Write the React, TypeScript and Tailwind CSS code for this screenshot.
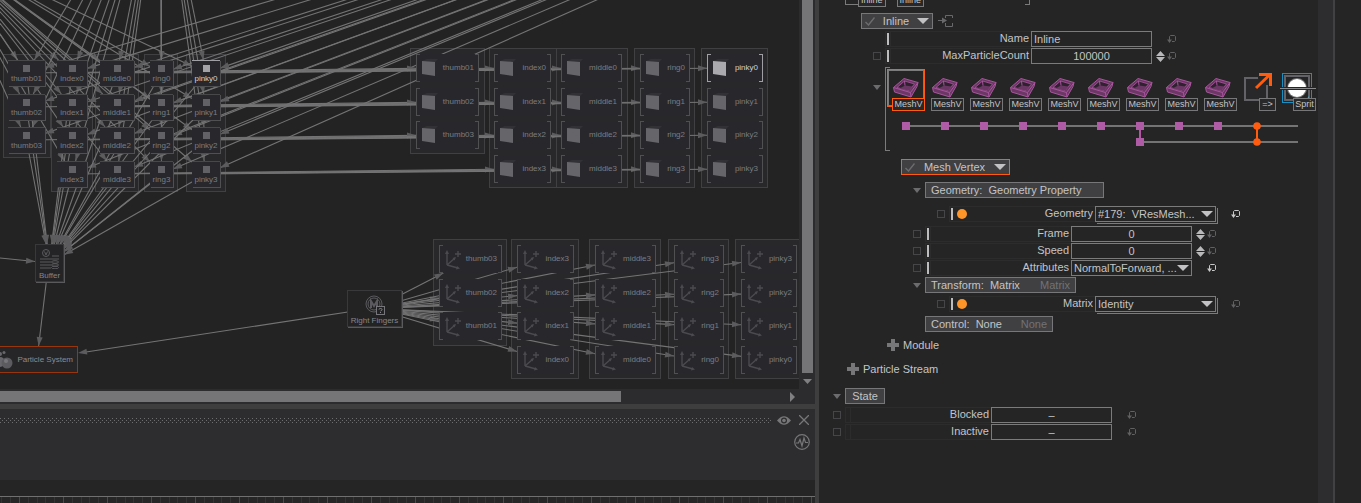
import { useState } from "react";
import type { ReactNode } from "react";

type Box = { id: string; x: number; y: number; w: number; h: number };
type Point = { x: number; y: number };

const ROWS = [0, 34, 67, 101];

const FINGERS = [
  { name: "thumb", count: 3 },
  { name: "index", count: 4 },
  { name: "middle", count: 4 },
  { name: "ring", count: 4 },
  { name: "pinky", count: 4 },
];

function label(finger: number, row: number) {
  return finger === 0 ? `thumb0${row + 1}` : `${FINGERS[finger].name}${row}`;
}

function column(finger: number, x: number, w: number, top: number, h: number, reversed = false): Box[] {
  const { count } = FINGERS[finger];
  return Array.from({ length: count }, (_, i) => ({
    id: label(finger, reversed ? count - 1 - i : i),
    x,
    y: top + ROWS[i],
    w,
    h,
  }));
}

const small = [[8, 37], [57, 30], [100, 34], [150, 23], [192, 28]].flatMap(([x, w], i) => column(i, x, w, 60, 26));
const meshes = [[416, 63], [494, 57], [561, 61], [640, 50], [707, 56]].flatMap(([x, w], i) => column(i, x, w, 54, 28));
const axes = [[439, 63], [517, 57], [595, 61], [674, 50], [741, 56]].flatMap(([x, w], i) =>
  column(i, x, w, 245, 28, true)
);

const groups: Box[] = [
  ...[[3, 48, 104], [51, 42, 138], [95, 44, 138], [144, 34, 138], [186, 40, 138]].map(([x, w, h], i) => ({
    id: `small-${i}`, x, y: 54, w, h,
  })),
  ...[[410, 75, 106], [489, 68, 140], [556, 72, 140], [634, 61, 140], [701, 67, 140]].map(([x, w, h], i) => ({
    id: `mesh-${i}`, x, y: 48, w, h,
  })),
  ...[[433, 74, 107], [511, 68, 140], [589, 72, 140], [668, 61, 140], [735, 72, 140]].map(([x, w, h], i) => ({
    id: `axis-${i}`, x, y: 239, w, h,
  })),
];

const buffer: Box = { id: "Buffer", x: 35, y: 244, w: 29, h: 38 };
const rightFingers: Box = { id: "Right Fingers", x: 347, y: 290, w: 55, h: 37 };
const particles: Box = { id: "Particle System", x: -8, y: 346, w: 86, h: 27 };

const center = (b: Box): Point => ({ x: b.x + b.w / 2, y: b.y + b.h / 2 });

// Parents that sit outside of the scrolled area
const offscreen: Point[] = [
  { x: -60, y: -54 },
  { x: 161, y: -150 },
  { x: 1236, y: -285 },
];

const edges: { from: Point; to: Box }[] = [
  ...offscreen.flatMap((from) => small.map((to) => ({ from, to }))),
  ...small.map((b) => ({ from: center(b), to: buffer })),
  ...small.map((b, i) => ({ from: center(b), to: meshes[i] })),
  ...axes.map((to) => ({ from: center(rightFingers), to })),
  { from: { x: 47, y: 276 }, to: { ...particles, x: 0, w: 74 } },
  { from: { x: -60, y: 252 }, to: buffer },
];

function Edge({ from, to }: { from: Point; to: Box }) {
  const c = center(to);
  const dx = c.x - from.x;
  const dy = c.y - from.y;
  const k = Math.min(to.w / 2 / Math.abs(dx || 1), to.h / 2 / Math.abs(dy || 1));
  const tip = { x: c.x - dx * k, y: c.y - dy * k };
  const angle = (Math.atan2(dy, dx) * 180) / Math.PI;
  return (
    <g>
      <line x1={from.x} y1={from.y} x2={tip.x} y2={tip.y} stroke="#747475" strokeWidth="1.1" />
      <path d="M0 0L-9 -3V3Z" fill="#5c5c5e" transform={`translate(${tip.x} ${tip.y}) rotate(${angle})`} />
    </g>
  );
}

function place(b: Box) {
  return { left: b.x, top: b.y, width: b.w, height: b.h };
}

function SmallNode({ box }: { box: Box }) {
  const on = box.id === "pinky0";
  return (
    <div
      className={`absolute flex flex-col items-center justify-between whitespace-nowrap border-t bg-[#28282c] pb-0.5 pt-1 text-[8px] leading-[10px] shadow-[1px_1px_0_#505053] ${
        on ? "border-[#a0a0a4] text-[#d2d2d4]" : "border-[#48484b] text-[#7c7c80]"
      }`}
      style={place(box)}
    >
      <span className={`size-[7px] ${on ? "bg-[#a3a3a7]" : "bg-[#626266]"}`} />
      <span>{box.id}</span>
    </div>
  );
}

function Brackets({ on }: { on: boolean }) {
  const tone = on ? "border-[#a0a0a4]" : "border-[#505053]";
  return (
    <>
      <span className={`w-1 self-stretch border-y border-l ${tone}`} />
      <span className={`order-last w-1 self-stretch border-y border-r ${tone}`} />
    </>
  );
}

function MeshNode({ box }: { box: Box }) {
  const on = box.id === "pinky0";
  return (
    <div
      className={`absolute flex items-center bg-[#28282c] text-[8px] leading-[10px] ${
        on ? "text-[#d2d2d4]" : "text-[#7c7c80]"
      }`}
      style={place(box)}
    >
      <Brackets on={on} />
      <svg className="ml-0.5 shrink-0" width="17" height="18" viewBox="0 0 17 18">
        <path d="M0 2L5 0H16L13 3V15L13 17Z" fill="#323236" />
        <path d="M0 2L13 3V17L0 15Z" fill={on ? "#a9a9ae" : "#66666a"} />
      </svg>
      <span className="flex-1 pr-px text-right">{box.id}</span>
    </div>
  );
}

function AxisNode({ box }: { box: Box }) {
  return (
    <div
      className="absolute flex items-center bg-[#28282c] text-[8px] leading-[10px] text-[#7c7c80]"
      style={place(box)}
    >
      <Brackets on={false} />
      <svg className="ml-0.5 shrink-0" width="18" height="22" viewBox="0 0 18 22" fill="none" stroke="#4b4b4f">
        <path d="M2 17V4M2 17L10 10M2 17L13 20M10 6H16M13 3V9" strokeWidth="1.4" />
        <path d="M2 2L4 6H0ZM11 9L9.5 12.5L7.5 10ZM15 20.5L11 21.5L12 18Z" fill="#4b4b4f" stroke="none" />
      </svg>
      <span className="flex-1 pr-px text-right">{box.id}</span>
    </div>
  );
}

function NodeGraph() {
  return (
    <div className="relative min-w-0 flex-1 overflow-hidden bg-[#232323]">
      {groups.map((g) => (
        <div key={g.id} className="absolute border border-[#404043] bg-[#28282a]" style={place(g)} />
      ))}
      <svg className="absolute inset-0 size-full">
        <line x1="374" y1="308" x2="86" y2="352" stroke="#747475" strokeWidth="1.1" />
        <path d="M0 0L-9 -3V3Z" fill="#5c5c5e" transform="translate(78 353) rotate(171)" />
        {edges.map((e, i) => (
          <Edge key={i} {...e} />
        ))}
      </svg>
      {small.map((b) => <SmallNode key={b.id} box={b} />)}
      {meshes.map((b) => <MeshNode key={b.id} box={b} />)}
      {axes.map((b) => <AxisNode key={b.id} box={b} />)}

      <div
        className="absolute flex flex-col items-center justify-between border border-[#39393b] bg-[#242426] pt-1 text-[8px] leading-[10px] text-[#858589] shadow-[1px_1px_0_#5a5a5d]"
        style={place(buffer)}
      >
        <svg width="20" height="20" viewBox="0 0 20 20" fill="none" stroke="#5b5b5f">
          <circle cx="6" cy="4" r="3.5" />
          <path d="M4.5 2.5L6 6L7.5 2.5M12 7H19M0 10H19M0 13H11M0 16H11M0 19H11" />
          <ellipse cx="15" cy="13" rx="3.5" ry="1.3" />
          <ellipse cx="15" cy="16" rx="3.5" ry="1.3" />
          <ellipse cx="15" cy="18.5" rx="3.5" ry="1.3" />
        </svg>
        {buffer.id}
      </div>

      <div
        className="absolute flex flex-col items-center justify-between whitespace-nowrap border border-[#39393b] bg-[#232324] pt-1 text-[8px] leading-[10px] text-[#858589] shadow-[1px_1px_0_#5a5a5d]"
        style={place(rightFingers)}
      >
        <svg width="20" height="20" viewBox="0 0 20 20" fill="none" stroke="#5b5b5f">
          <circle cx="9" cy="9" r="8" />
          <circle cx="9" cy="9" r="6" />
          <path d="M6 13V6L9 11L12 6V13" strokeWidth="2" />
          <rect x="11.5" y="11.5" width="8" height="8" fill="#232324" stroke="#77777b" />
          <path d="M14 14.5Q14 13.5 15.5 13.5Q17 13.5 17 14.5Q17 15.5 15.5 16M15.5 17V18" stroke="#88888c" />
        </svg>
        {rightFingers.id}
      </div>

      <div
        className="absolute flex items-center justify-end gap-1 whitespace-nowrap border border-[#97350c] bg-[#262628] pr-1 text-[8px] text-[#8b8b90]"
        style={place(particles)}
      >
        <svg className="shrink-0" width="22" height="20" viewBox="0 0 22 20" fill="#68686c">
          <circle cx="9" cy="4" r="2" />
          <circle cx="13" cy="2.5" r="1.5" />
          <circle cx="9" cy="12" r="5" />
          <circle cx="16" cy="13" r="5.5" fill="#5c5c60" />
          <circle cx="15" cy="11" r="2" fill="#77777b" />
        </svg>
        {particles.id}
      </div>
    </div>
  );
}

function GraphPane() {
  return (
    <section className="flex min-h-0 flex-1 flex-col bg-[#2c2c2e]">
      <div className="flex min-h-0 flex-1">
        <NodeGraph />
        <div className="flex w-4 flex-col items-center">
          <div className="w-[11px] flex-1 bg-[#757577]" />
          <svg className="mb-1 mt-1.5" width="9" height="6" viewBox="0 0 9 6" fill="#808083">
            <path d="M0 0H9L4.5 5Z" />
          </svg>
        </div>
      </div>
      <div className="flex h-[15px] shrink-0 items-center justify-between pr-5">
        <div className="h-[11px] w-[621px] bg-[#757577]" />
        <svg width="5" height="10" viewBox="0 0 5 10" fill="#808083">
          <path d="M0 0L5 5L0 10Z" />
        </svg>
      </div>
    </section>
  );
}

function Timeline() {
  return (
    <section className="flex h-[94px] shrink-0 flex-col bg-[#2d2d2f]">
      <div className="flex h-[71px] flex-col items-end gap-[5px] pr-[5px]">
        <div className="flex h-5 w-full items-center gap-1.5 pt-0.5">
          <svg className="h-[5px] min-w-0 flex-1">
            <defs>
              <pattern id="grip" width="4" height="4" patternUnits="userSpaceOnUse">
                <path d="M0 0H1V1H0ZM2 2H3V3H2Z" fill="#6d6d6f" />
              </pattern>
            </defs>
            <rect width="100%" height="5" fill="url(#grip)" />
          </svg>
          <button aria-label="Show" className="shrink-0">
            <svg width="14" height="9" viewBox="0 0 14 9">
              <path d="M0 4.5Q7 -4 14 4.5Q7 13 0 4.5Z" fill="#77777a" />
              <circle cx="7" cy="4.5" r="3" fill="#2d2d2f" />
              <circle cx="7" cy="4.5" r="1.8" fill="#77777a" />
            </svg>
          </button>
          <button aria-label="Close" className="ml-0.5 mr-px shrink-0">
            <svg width="10" height="10" viewBox="0 0 10 10" stroke="#77777a" strokeWidth="1.3">
              <path d="M0 0L10 10M10 0L0 10" />
            </svg>
          </button>
        </div>
        <button aria-label="Monitor">
          <svg width="16" height="16" viewBox="0 0 16 16" fill="none" stroke="#77777a" strokeWidth="1.2">
            <circle cx="8" cy="8" r="7.3" />
            <path d="M2 9H4.5L6 5.5L8 12L10 4L11.5 8.5H14" />
          </svg>
        </button>
      </div>
      <div className="h-4 bg-[#252525]" />
      <svg className="h-[7px] w-full border-t border-[#707070] bg-[#262626]">
        <defs>
          <pattern id="ticks" x="19" width="44" height="7" patternUnits="userSpaceOnUse">
            <path d="M0.5 0V7" stroke="#4a4a4a" />
            <path d="M9.5 0V7M18.5 0V7M26.5 0V7M35.5 0V7" stroke="#343434" />
          </pattern>
        </defs>
        <rect width="100%" height="7" fill="url(#ticks)" />
      </svg>
    </section>
  );
}

function Triangle() {
  return (
    <svg className="shrink-0" width="8" height="5" viewBox="0 0 8 5" fill="#6c6c6f">
      <path d="M0 0H8L4 5Z" />
    </svg>
  );
}

function DropArrow() {
  return (
    <svg className="shrink-0" width="12" height="6" viewBox="0 0 12 6" fill="#c2c2c4">
      <path d="M0 0H12L6 6Z" />
    </svg>
  );
}

function Reset({ on = false }: { on?: boolean }) {
  return (
    <button aria-label="Reset" className={on ? "text-[#c8c8ca]" : "text-[#616163]"}>
      <svg width="9" height="8" viewBox="0 0 9 8" fill="none" stroke="currentColor">
        <path d="M2.5 5.5V1.5L3.5 0.5H7.5L8.5 1.5V5.5L7.5 6.5H5" />
        <path d="M0 4.5H5L2.5 8Z" fill="currentColor" stroke="none" />
      </svg>
    </button>
  );
}

function Spinner() {
  return (
    <svg className="shrink-0" width="9" height="11" viewBox="0 0 9 11" fill="#b9b9bb">
      <path d="M4.5 0L9 5H0ZM4.5 11L0 6H9Z" />
    </svg>
  );
}

type FieldProps = {
  name: string;
  value: string;
  kind?: "text" | "number" | "select" | "linked";
  indent: string;
  check?: boolean;
  bar?: boolean;
  reset?: boolean;
};

function Field({ name, value, kind = "text", indent, check = true, bar = true, reset = false }: FieldProps) {
  const [current, setCurrent] = useState(value);
  const linked = kind === "linked";
  return (
    <div className={`flex h-4 items-center ${indent}`}>
      <span className="flex w-3 shrink-0">
        {check && (
          <input
            type="checkbox"
            aria-label={`Animate ${name}`}
            className="size-2 appearance-none border border-[#464648]"
          />
        )}
      </span>
      <div className="flex h-4 w-[146px] shrink-0 items-center border-y border-l border-[#2c2c2c]">
        <span className={`ml-px h-3 w-0.5 shrink-0 ${bar ? "bg-[#bdbdbf]" : "bg-[#252525]"}`} />
        <span className={`ml-px h-full border-l border-[#2c2c2c] ${linked ? "hidden" : ""}`} />
        {linked && <span className="ml-1 size-2.5 rounded-full bg-[#ff9528]" />}
        <label htmlFor={name} className="flex-1 self-start pr-0.5 text-right leading-3">
          {name}
        </label>
      </div>
      {kind === "select" || linked ? (
        <div
          className={`relative h-4 w-[121px] shrink-0 border border-[#7b7b7b] ${
            linked ? "shadow-[1px_1px_0_#252525,2px_2px_0_#7b7b7b]" : ""
          }`}
        >
          <select
            id={name}
            className="block h-3.5 w-full appearance-none whitespace-pre bg-transparent pl-0.5 leading-3.5 outline-none"
          >
            <option>{value}</option>
          </select>
          <span className="pointer-events-none absolute right-0.5 top-1">
            <DropArrow />
          </span>
        </div>
      ) : (
        <input
          id={name}
          value={current}
          onChange={(e) => setCurrent(e.target.value)}
          className={`h-4 w-[121px] shrink-0 border border-[#7b7b7b] bg-transparent px-0.5 leading-3.5 outline-none ${
            name === "Name" ? "" : "text-center"
          }`}
        />
      )}
      <span className="flex w-[15px] shrink-0 pl-1">{kind === "number" && <Spinner />}</span>
      <Reset on={reset} />
    </div>
  );
}

function Header({ children, className = "" }: { children: ReactNode; className?: string }) {
  return (
    <button className={`flex h-4 items-center whitespace-pre border bg-[#404042] leading-3.5 ${className}`}>
      {children}
    </button>
  );
}

function Check() {
  return (
    <svg className="shrink-0" width="10" height="9" viewBox="0 0 10 9" fill="none" stroke="#6c6c6f" strokeWidth="1.4">
      <path d="M0.5 5L3.5 8L9.5 0.5" />
    </svg>
  );
}

function AddRow({ children, className }: { children: ReactNode; className: string }) {
  return (
    <button className={`flex h-4 items-center gap-1 ${className}`}>
      <svg width="12" height="12" viewBox="0 0 12 12" fill="#77777a">
        <path d="M4 0H8V4H12V8H8V12H4V8H0V4H4Z" />
      </svg>
      {children}
    </button>
  );
}

function MeshIcon() {
  return (
    <svg width="26" height="20" viewBox="0 0 26 20" fill="none" stroke="#a9559e" strokeLinejoin="round">
      <path d="M0.5 9.5L11 0.5L25 4.5L24 8.5L18 19L1.5 14Z" fill="#6b3765" />
      <path d="M4 9.5L11.5 3L21.5 6L16 12.5Z" fill="#2f222f" strokeWidth="0.8" />
      <path d="M6.5 10.5L12 7.5L19.5 8.5L16 12.5Z" fill="#6b3765" stroke="none" />
      <path d="M0.5 9.5L17.5 14.5L25 4.5M17.5 14.5L18 19M11.5 3L12 7.5" />
    </svg>
  );
}

function ModuleStrip() {
  return (
    <div className="flex h-[84px] pl-[54px]">
      <span className="flex w-3 pt-[18px]">
        <Triangle />
      </span>
      <span className="w-[5px] border-y border-l border-[#7b7b7b]" />
      <div className="-ml-[3px] pt-0.5">
        <div className="flex text-[9px] leading-[11px]">
          {Array.from({ length: 9 }, (_, i) => (
            <button key={i} className="relative flex h-[42px] w-[39px] items-start">
              <span
                className={`flex h-[38px] w-[38px] items-center justify-center border ${
                  i === 0 ? "border-[#ff5c10]" : "border-transparent"
                }`}
              >
                <span
                  className={`flex h-9 w-9 items-center justify-center border ${
                    i === 0 ? "border-[#7b7b7b]" : "border-transparent"
                  }`}
                >
                  <MeshIcon />
                </span>
              </span>
              <span
                className={`absolute bottom-0 right-px w-[33px] border bg-[#28282a] text-center ${
                  i === 0 ? "border-[#ff5c10]" : "border-[#77777a]"
                }`}
              >
                MeshV
              </span>
            </button>
          ))}
          <button className="relative ml-1.5 flex h-[42px] w-9 items-start">
            <svg className="mt-1" width="30" height="30" viewBox="0 0 30 30" fill="none">
              <path d="M14 5H1V27H23V12" stroke="#626267" strokeWidth="2" fill="#28282a" />
              <path d="M12 15L26 1.5" stroke="#ff5c10" strokeWidth="3" />
              <path d="M15 1.5H26.5V13" stroke="#ff5c10" strokeWidth="3" />
            </svg>
            <span className="absolute bottom-0 right-1 w-[17px] border border-[#77777a] bg-[#28282a] text-center">
              {"=>"}
            </span>
          </button>
          <button className="relative flex h-[42px] w-9 items-start">
            <svg className="mt-1 shrink-0" width="36" height="30" viewBox="0 0 36 30" fill="none">
              <rect x="2.5" y="0.5" width="29" height="29" stroke="#1590c4" />
              <rect x="5" y="3" width="24" height="24" stroke="#626267" strokeWidth="2" />
              <circle cx="17" cy="15" r="10" fill="#77777a" />
              <circle cx="17" cy="15" r="9" fill="#fff" />
              <path d="M0 15.5H36" stroke="#252525" strokeWidth="3" />
              <path d="M0 15.5H36" stroke="#89898b" />
              <path d="M29 23V27H26Z" fill="#27b5e8" />
            </svg>
            <span className="absolute bottom-0 right-0 w-[23px] border border-[#77777a] bg-[#28282a] text-center">
              Sprit
            </span>
          </button>
        </div>
        <svg className="mt-2.5" width="412" height="26" viewBox="0 0 412 26">
          <path d="M19 5H411M253 21H411" stroke="#747474" strokeWidth="2" />
          <path d="M253 5V21" stroke="#b058a4" strokeWidth="2" />
          {Array.from({ length: 9 }, (_, i) => (
            <rect key={i} x={15 + i * 39} y="1" width="8" height="8" fill="#b05ba5" />
          ))}
          <rect x="249" y="17" width="8" height="8" fill="#b05ba5" />
          <path d="M370 5V21" stroke="#ff5c10" strokeWidth="2" />
          <circle cx="370" cy="5" r="3.8" fill="#ff5c10" />
          <circle cx="370" cy="21" r="3.8" fill="#ff5c10" />
        </svg>
      </div>
    </div>
  );
}

function Inspector() {
  return (
    <aside className="flex w-[542px] shrink-0 bg-[#252525] text-[11px] text-[#c4c4c6]">
      <div className="min-w-0 flex-1">
        {/* tail of the inlined streams, scrolled out of view */}
        <div className="flex h-[13px] items-start overflow-hidden pl-[26px] text-[9px] leading-[11px]">
          <span className="h-[5px] w-[13px] border-b border-l border-[#7b7b7b]" />
          <span className="-mt-1.5 h-[13px] border border-[#7b7b7b] bg-[#28282a] px-0.5">Inline</span>
          <span className="-mt-1.5 ml-[11px] h-[13px] border border-[#7b7b7b] bg-[#28282a] px-0.5">Inline</span>
          <span className="ml-[101px] h-[5px] w-[5px] border-b border-r border-[#7b7b7b]" />
        </div>
        <div className="mb-0.5 flex h-4 items-center gap-[5px] pl-[42px]">
          <Header className="w-[72px] justify-between border-[#77777a] px-[3px]">
            <Check />
            Inline
            <DropArrow />
          </Header>
          <svg width="15" height="12" viewBox="0 0 15 12" fill="none" stroke="#69696c">
            <path d="M7.5 3V0.5H14.5V3M7.5 8V11.5H14.5V8M0 5.5H6" />
            <path d="M4 2.5L9 5.5L4 8.5Z" fill="#69696c" stroke="none" />
          </svg>
        </div>
        <div className="mb-[3px] flex flex-col gap-px">
          <Field name="Name" value="Inline" indent="pl-[54px]" check={false} />
          <Field name="MaxParticleCount" value="100000" kind="number" indent="pl-[54px]" />
        </div>
        <ModuleStrip />

        <div className="mt-2 flex pl-[82px]">
          <Header className="w-[109px] justify-between border-[#ff5c10] px-[3px]">
            <Check />
            Mesh Vertex
            <DropArrow />
          </Header>
        </div>
        <div className="mt-[7px] flex items-center gap-1 pl-[94px]">
          <Triangle />
          <Header className="w-[179px] border-[#77777a] px-[5px]">{"Geometry:  Geometry Property"}</Header>
        </div>
        <div className="mb-1 mt-2">
          <Field name="Geometry" value={"#179:\u00a0 VResMesh..."} kind="linked" indent="pl-[118px]" reset />
        </div>
        <div className="mb-px flex flex-col gap-px">
          <Field name="Frame" value="0" kind="number" indent="pl-[94px]" />
          <Field name="Speed" value="0" kind="number" indent="pl-[94px]" />
          <Field name="Attributes" value="NormalToForward, ..." kind="select" indent="pl-[94px]" reset />
        </div>
        <div className="flex items-center gap-1 pl-[94px]">
          <Triangle />
          <Header className="w-[151px] justify-between border-[#77777a] px-[5px]">
            <span>{"Transform:  Matrix"}</span>
            <span className="text-[#727275]">Matrix</span>
          </Header>
        </div>
        <div className="mb-1 mt-[3px]">
          <Field name="Matrix" value="Identity" kind="linked" indent="pl-[118px]" />
        </div>
        <div className="flex pl-[106px]">
          <Header className="w-32 justify-between border-[#77777a] px-[5px]">
            <span>{"Control:  None"}</span>
            <span className="text-[#727275]">None</span>
          </Header>
        </div>

        <AddRow className="mt-[5px] pl-[68px]">Module</AddRow>
        <AddRow className="mt-2 pl-7">Particle Stream</AddRow>

        <div className="mb-[3px] mt-[11px] flex items-center gap-1 pl-3.5">
          <Triangle />
          <Header className="w-10 justify-center border-[#77777a]">State</Header>
        </div>
        <div className="flex flex-col gap-px">
          <Field name="Blocked" value="–" indent="pl-3.5" bar={false} />
          <Field name="Inactive" value="–" indent="pl-3.5" bar={false} />
        </div>
      </div>
      <div className="w-[17px] border-r-2 border-[#414143] bg-[#2d2d30]" />
      <div className="w-[26px]" />
    </aside>
  );
}

export default function App() {
  return (
    <div className="flex h-screen overflow-hidden bg-[#252525] font-['Liberation_Sans',Arial,sans-serif]">
      <main className="flex min-w-0 flex-1 flex-col border-r-4 border-[#3e3e3f]">
        <GraphPane />
        <div className="h-[5px] shrink-0 bg-[#3e3e3f]" />
        <Timeline />
      </main>
      <Inspector />
    </div>
  );
}
